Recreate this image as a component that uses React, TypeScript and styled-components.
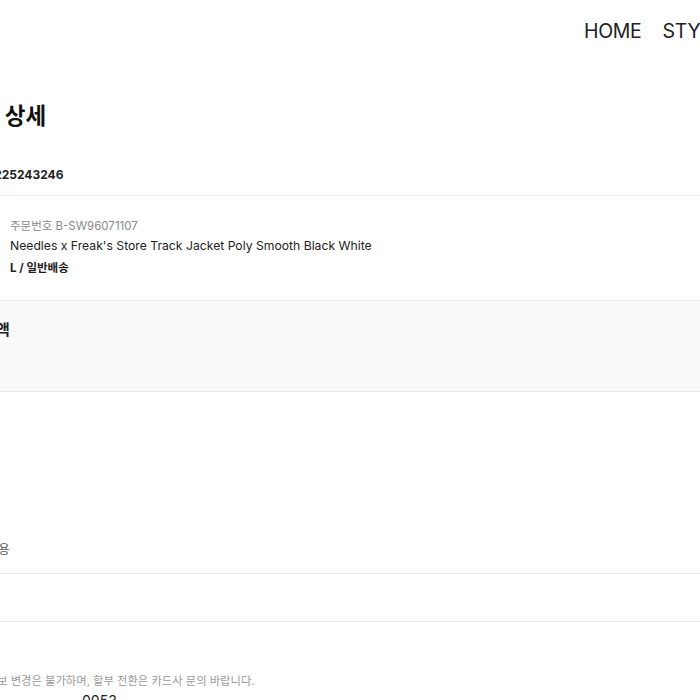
import React, { FC } from 'react'
import styled, { createGlobalStyle } from 'styled-components'

const GlobalStyle = createGlobalStyle`
  html, body {
    margin: 0;
    padding: 0;
    background: #fff;
    overflow: hidden;
  }
  body {
    font-family: "Inter", "Noto Sans CJK KR", sans-serif;
    color: #222;
  }
`

const Shell = styled.div`
  width: 1100px;
  margin-left: -49px;
`

const Header = styled.header`
  height: 62px;
  display: flex;
  align-items: center;
  padding-left: 633px;
  gap: 21px;
`

const NavItem = styled.a`
  font-family: "Inter", "Noto Sans CJK KR", sans-serif;
  font-size: 19.5px;
  color: #222;
  text-decoration: none;
  letter-spacing: -0.3px;
`

const Content = styled.main`
  width: 900px;
`

const Title = styled.h1`
  margin: 38px 0 0;
  padding-left: 7px;
  font-size: 22.5px;
  line-height: 32px;
  font-weight: 700;
  color: #111;
`

const OrderLine = styled.div`
  margin-top: 33px;
  padding-left: 7px;
  padding-bottom: 10px;
  border-bottom: 1px solid #ebebeb;
  font-size: 12px;
  line-height: 20px;
  font-weight: 700;
`

const ProductRow = styled.div`
  display: flex;
  gap: 15px;
  padding: 21px 0 23px;
  border-bottom: 1px solid #ebebeb;
`

const Thumb = styled.div`
  width: 44px;
  height: 44px;
  background: #f4f4f4;
  border-radius: 8px;
`

const ProductInfo = styled.div`
  display: flex;
  flex-direction: column;
`

const OrderNo = styled.span`
  font-size: 11.5px;
  line-height: 18px;
  color: #8a8a8a;
`

const ProductName = styled.span`
  margin-top: 1px;
  font-size: 12.2px;
  line-height: 19px;
  color: #222;
`

const Option = styled.span`
  margin-top: 4px;
  font-size: 11.5px;
  line-height: 18px;
  font-weight: 700;
  color: #222;
`

const Band = styled.section`
  height: 91px;
  box-sizing: border-box;
  padding-top: 18px;
  background: #fafafa;
  border-bottom: 1px solid #ebebeb;
`

const SectionTitle = styled.h2`
  margin: 0;
  font-size: 15px;
  line-height: 22px;
  font-weight: 700;
  color: #222;
`

const InfoRow = styled.div<{ $top?: number }>`
  display: flex;
  align-items: center;
  padding-top: ${p => p.$top ?? 0}px;
  padding-bottom: 14px;
  border-bottom: 1px solid #ebebeb;
  min-height: 18px;
`

const BlankRow = styled.div`
  height: 47px;
  border-bottom: 1px solid #ebebeb;
`

const Label = styled.span`
  font-size: 12px;
  line-height: 18px;
  color: #555;
`

const Notice = styled.p`
  margin: 51px 0 0 -9px;
  font-size: 11.3px;
  line-height: 16px;
  color: #9a9a9a;
`

const CardRow = styled.div`
  display: grid;
  grid-template-columns: 131px 1fr;
  margin-top: 2px;
`

const CardValue = styled.span`
  font-size: 14px;
  line-height: 20px;
  color: #222;
`

const App: FC = () => {
  return (
    <>
      <GlobalStyle />
      <Shell>
        <Header>
          <NavItem href="#">HOME</NavItem>
          <NavItem href="#">STYLE</NavItem>
          <NavItem href="#">SHOP</NavItem>
        </Header>
        <Content>
          <Title>주문 상세</Title>
          <OrderLine>20231225243246</OrderLine>
          <ProductRow>
            <Thumb />
            <ProductInfo>
              <OrderNo>주문번호 B-SW96071107</OrderNo>
              <ProductName>Needles x Freak's Store Track Jacket Poly Smooth Black White</ProductName>
              <Option>L / 일반배송</Option>
            </ProductInfo>
          </ProductRow>
          <Band>
            <SectionTitle>결제 금액</SectionTitle>
          </Band>
          <InfoRow $top={149}>
            <Label>포인트 사용</Label>
          </InfoRow>
          <BlankRow />
          <Notice>결제수단 정보 변경은 불가하며, 할부 전환은 카드사 문의 바랍니다.</Notice>
          <CardRow>
            <span />
            <CardValue>0053</CardValue>
          </CardRow>
        </Content>
      </Shell>
    </>
  )
}

export default App
